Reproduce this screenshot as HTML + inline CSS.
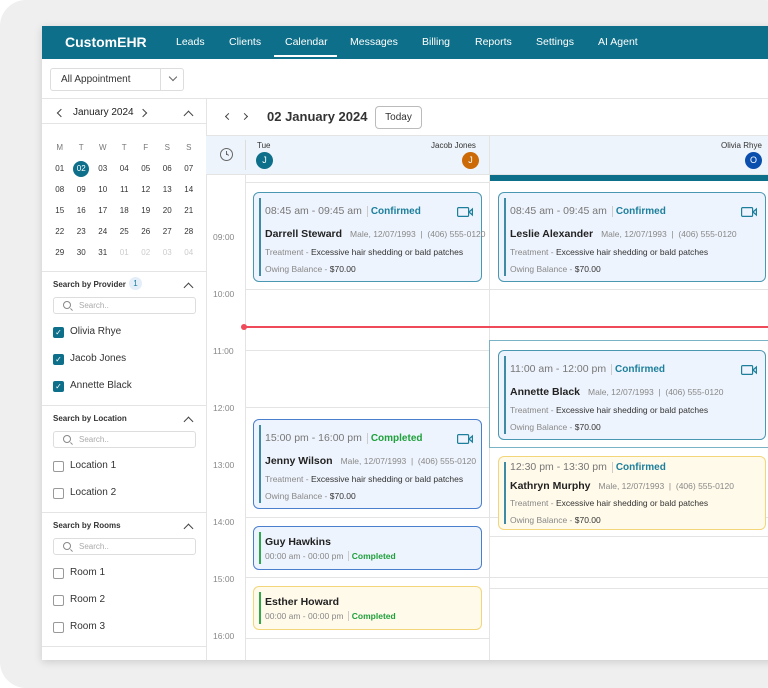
<!DOCTYPE html>
<html><head><meta charset="utf-8"><style>
*{box-sizing:border-box;margin:0;padding:0}
body{width:768px;height:688px;background:#fff;font-family:"Liberation Sans",sans-serif;position:relative;overflow:hidden;color:#222}
.bg{position:absolute;left:0;top:0;width:790px;height:688px;background:#efefef;border-radius:26px}
.app{position:absolute;left:42px;top:26px;width:740px;height:634px;background:#fff;box-shadow:0 2px 8px rgba(0,0,0,.15);overflow:hidden}
.a{position:absolute}
.nav{left:0;top:0;width:740px;height:33px;background:#0d6f89;color:#fff}
.nav span{position:absolute;top:10px;font-size:10.5px}
.cal td{width:21.5px;text-align:center;font-size:8px;height:21px;color:#333}
.cb{position:absolute;width:11px;height:11px;border-radius:2px}
.cb.on{background:#0d6f89;color:#fff;font-size:8px;line-height:11px;text-align:center}
.cb.off{border:1px solid #999;background:#fff}
.lbl{position:absolute;font-size:10px;color:#333}
.sh{position:absolute;font-size:8px;font-weight:bold;color:#333}
.srch{position:absolute;left:11px;width:143px;height:17px;border:1px solid #ddd;border-radius:3px;font-size:8px;color:#aaa;padding:3px 0 0 25px}
.srch i{position:absolute;left:9px;top:3px;width:8px;height:8px;border:1px solid #888;border-radius:50%}
.srch i:after{content:"";position:absolute;left:6px;top:7px;width:3px;height:1px;background:#888;transform:rotate(45deg)}
.chev{position:absolute;width:7px;height:7px;border-left:1.3px solid #444;border-top:1.3px solid #444;transform:rotate(45deg)}
.card{position:absolute;border:1px solid #4a97b2;background:#eef4fd;border-radius:6px}
.card .bar{position:absolute;left:5px;top:5px;bottom:5px;width:2px;background:#3f8aa5}
.card div{position:absolute;left:11px;white-space:nowrap}
.t{font-size:10.5px;color:#777}
.st{font-size:10px;font-weight:bold;color:#1c7f9c;border-left:1px solid #ccc;padding-left:3px;margin-left:2px}
.nm{font-size:10.5px;font-weight:bold;color:#222}
.mt{font-size:8.5px;color:#888;font-weight:normal;margin-left:8px}
.tr{font-size:8.5px;color:#888}
.tr b{font-weight:normal;color:#333}
.vid{position:absolute;top:14px;right:8px;width:16px;height:10px}
.hr{position:absolute;font-size:8.5px;color:#888;left:6px}
.ln{position:absolute;height:1px;background:#e4e4e4}
</style></head><body>
<div class="bg"></div>
<div class="app">
 <div class="a nav">
  <span style="left:23px;top:8px;font-size:14px;font-weight:bold">CustomEHR</span>
  <span style="left:134px">Leads</span><span style="left:187px">Clients</span>
  <span style="left:243px">Calendar</span><div class="a" style="left:232px;top:29px;width:63px;height:2px;background:#fff"></div>
  <span style="left:308px">Messages</span><span style="left:380px">Billing</span><span style="left:433px">Reports</span><span style="left:494px">Settings</span><span style="left:556px">AI Agent</span>
 </div>
 <div class="a" style="left:8px;top:42px;width:134px;height:23px;border:1px solid #ddd;border-radius:3px"></div>
 <div class="a" style="left:19px;top:48px;font-size:10px;color:#333">All Appointment</div>
 <div class="a" style="left:118px;top:43px;width:1px;height:21px;background:#ddd"></div>
 <div class="chev" style="left:128px;top:48px;transform:rotate(225deg);width:6px;height:6px;border-color:#666"></div>
 <div class="ln" style="left:0;top:72px;width:740px"></div>
 <div class="a" style="left:164px;top:72px;width:1px;height:562px;background:#e4e4e4"></div>
 <div class="chev" style="left:16px;top:84px;transform:rotate(-45deg);width:6px;height:6px"></div>
 <div class="a" style="left:31px;top:81px;font-size:10px;color:#222">January 2024</div>
 <div class="chev" style="left:98px;top:84px;transform:rotate(135deg);width:6px;height:6px"></div>
 <div class="chev" style="left:143px;top:86px"></div>
 <div class="ln" style="left:0;top:97px;width:164px"></div>
 <table class="cal a" style="left:7px;top:111px;border-collapse:collapse">
  <tr><td style="color:#777;height:20px">M</td><td style="color:#777">T</td><td style="color:#777">W</td><td style="color:#777">T</td><td style="color:#777">F</td><td style="color:#777">S</td><td style="color:#777">S</td></tr>
  <tr><td>01</td><td><span style="display:inline-block;width:16px;height:16px;line-height:16px;border-radius:50%;background:#0d6f89;color:#fff">02</span></td><td>03</td><td>04</td><td>05</td><td>06</td><td>07</td></tr>
  <tr><td>08</td><td>09</td><td>10</td><td>11</td><td>12</td><td>13</td><td>14</td></tr>
  <tr><td>15</td><td>16</td><td>17</td><td>18</td><td>19</td><td>20</td><td>21</td></tr>
  <tr><td>22</td><td>23</td><td>24</td><td>25</td><td>26</td><td>27</td><td>28</td></tr>
  <tr><td>29</td><td>30</td><td>31</td><td style="color:#ccc">01</td><td style="color:#ccc">02</td><td style="color:#ccc">03</td><td style="color:#ccc">04</td></tr>
 </table>
 <div class="ln" style="left:0;top:245px;width:164px"></div>
 <div class="sh" style="left:11px;top:254px">Search by Provider</div>
 <div class="a" style="left:87px;top:251px;width:13px;height:13px;border-radius:50%;background:#e3eef9;font-size:8px;color:#1c7f9c;text-align:center;line-height:13px">1</div>
 <div class="chev" style="left:143px;top:258px"></div>
 <div class="srch" style="top:271px"><i></i>Search..</div>
 <div class="cb on" style="left:11px;top:301px">✓</div><div class="lbl" style="left:28px;top:300px">Olivia Rhye</div>
 <div class="cb on" style="left:11px;top:328px">✓</div><div class="lbl" style="left:28px;top:327px">Jacob Jones</div>
 <div class="cb on" style="left:11px;top:355px">✓</div><div class="lbl" style="left:28px;top:354px">Annette Black</div>
 <div class="ln" style="left:0;top:379px;width:164px"></div>
 <div class="sh" style="left:11px;top:388px">Search by Location</div>
 <div class="chev" style="left:143px;top:392px"></div>
 <div class="srch" style="top:405px"><i></i>Search..</div>
 <div class="cb off" style="left:11px;top:435px"></div><div class="lbl" style="left:28px;top:434px">Location 1</div>
 <div class="cb off" style="left:11px;top:462px"></div><div class="lbl" style="left:28px;top:461px">Location 2</div>
 <div class="ln" style="left:0;top:486px;width:164px"></div>
 <div class="sh" style="left:11px;top:495px">Search by Rooms</div>
 <div class="chev" style="left:143px;top:499px"></div>
 <div class="srch" style="top:512px"><i></i>Search..</div>
 <div class="cb off" style="left:11px;top:542px"></div><div class="lbl" style="left:28px;top:541px">Room 1</div>
 <div class="cb off" style="left:11px;top:569px"></div><div class="lbl" style="left:28px;top:568px">Room 2</div>
 <div class="cb off" style="left:11px;top:596px"></div><div class="lbl" style="left:28px;top:595px">Room 3</div>
 <div class="ln" style="left:0;top:620px;width:164px"></div>
 <div class="chev" style="left:184px;top:88px;transform:rotate(-45deg);width:5px;height:5px"></div>
 <div class="chev" style="left:200px;top:88px;transform:rotate(135deg);width:5px;height:5px"></div>
 <div class="a" style="left:225px;top:83px;font-size:13px;font-weight:bold;color:#333">02 January 2024</div>
 <div class="a" style="left:333px;top:80px;width:47px;height:23px;border:1px solid #bbb;border-radius:4px;font-size:10px;color:#333;text-align:center;line-height:21px">Today</div>
 <div class="a" style="left:164px;top:109px;width:576px;height:40px;background:#eef4fb;border-top:1px solid #e4e4e4;border-bottom:1px solid #e4e4e4"></div>
 <div class="a" style="left:178px;top:122px;width:13px;height:13px;border:1.3px solid #666;border-radius:50%"></div>
 <div class="a" style="left:184px;top:125px;width:1.3px;height:4px;background:#666"></div>
 <div class="a" style="left:184px;top:128px;width:3px;height:1.3px;background:#666;transform:rotate(40deg)"></div>
 <div class="a" style="left:203px;top:114px;width:1px;height:30px;background:#ddd"></div>
 <div class="a" style="left:215px;top:115px;font-size:8px;color:#333">Tue</div>
 <div class="a" style="left:214px;top:126px;width:17px;height:17px;border-radius:50%;background:#0d6f89;color:#fff;font-size:9px;text-align:center;line-height:17px">J</div>
 <div class="a" style="left:389px;top:115px;font-size:8px;color:#333">Jacob Jones</div>
 <div class="a" style="left:420px;top:126px;width:17px;height:17px;border-radius:50%;background:#cc6a07;color:#fff;font-size:9px;text-align:center;line-height:17px">J</div>
 <div class="a" style="left:447px;top:109px;width:1px;height:525px;background:#e4e4e4"></div>
 <div class="a" style="left:679px;top:115px;font-size:8px;color:#333">Olivia Rhye</div>
 <div class="a" style="left:703px;top:126px;width:17px;height:17px;border-radius:50%;background:#0b4fae;color:#fff;font-size:9px;text-align:center;line-height:17px">O</div>
 <div class="a" style="left:448px;top:149px;width:292px;height:6px;background:#0d6f89"></div>
 <div class="a" style="left:203px;top:149px;width:1px;height:485px;background:#e4e4e4"></div>
 <div class="ln" style="left:203px;top:156px;width:244px"></div>
 <div class="hr" style="left:171px;top:206px">09:00</div>
 <div class="hr" style="left:171px;top:263px">10:00</div>
 <div class="hr" style="left:171px;top:320px">11:00</div>
 <div class="hr" style="left:171px;top:377px">12:00</div>
 <div class="hr" style="left:171px;top:434px">13:00</div>
 <div class="hr" style="left:171px;top:491px">14:00</div>
 <div class="hr" style="left:171px;top:548px">15:00</div>
 <div class="hr" style="left:171px;top:605px">16:00</div>
 <div class="ln" style="left:203px;top:263px;width:537px"></div>
 <div class="ln" style="left:203px;top:324px;width:244px"></div>
 <div class="ln" style="left:203px;top:381px;width:244px"></div>
 <div class="ln" style="left:203px;top:491px;width:537px"></div>
 <div class="ln" style="left:203px;top:551px;width:537px"></div>
 <div class="ln" style="left:203px;top:612px;width:244px"></div>
 <div class="ln" style="left:448px;top:421px;width:292px"></div>
 <div class="ln" style="left:448px;top:510px;width:292px"></div>
 <div class="ln" style="left:448px;top:562px;width:292px"></div>
 <div class="a" style="left:447px;top:314px;width:293px;height:108px;border:1px solid #7bb3c6;border-right:none"></div>
 <div class="a" style="left:203px;top:300px;width:537px;height:1.5px;background:#ee4a5a;z-index:5"></div>
 <div class="a" style="left:199px;top:298px;width:6px;height:6px;border-radius:50%;background:#ee4a5a;z-index:5"></div>
 <div class="card" style="left:211px;top:166px;width:229px;height:90px"><span class="bar"></span>
  <div class="t" style="top:12px">08:45 am - 09:45 am <span class="st">Confirmed</span></div>
  <div class="nm" style="top:35px">Darrell Steward<span class="mt">Male, 12/07/1993 &nbsp;| &nbsp;(406) 555-0120</span></div>
  <div class="tr" style="top:54px">Treatment - <b>Excessive hair shedding or bald patches</b></div>
  <div class="tr" style="top:71px">Owing Balance - <b>$70.00</b></div>
  <svg class="vid" viewBox="0 0 16 10"><rect x=".6" y=".6" width="11" height="8.8" rx="1" fill="none" stroke="#1c7f9c" stroke-width="1.2"/><path d="M12 5l3.4-3v6z" fill="none" stroke="#1c7f9c" stroke-width="1.2"/></svg></div>
 <div class="card" style="left:456px;top:166px;width:268px;height:90px"><span class="bar"></span>
  <div class="t" style="top:12px">08:45 am - 09:45 am <span class="st">Confirmed</span></div>
  <div class="nm" style="top:35px">Leslie Alexander<span class="mt">Male, 12/07/1993 &nbsp;| &nbsp;(406) 555-0120</span></div>
  <div class="tr" style="top:54px">Treatment - <b>Excessive hair shedding or bald patches</b></div>
  <div class="tr" style="top:71px">Owing Balance - <b>$70.00</b></div>
  <svg class="vid" viewBox="0 0 16 10"><rect x=".6" y=".6" width="11" height="8.8" rx="1" fill="none" stroke="#1c7f9c" stroke-width="1.2"/><path d="M12 5l3.4-3v6z" fill="none" stroke="#1c7f9c" stroke-width="1.2"/></svg></div>
 <div class="card" style="left:456px;top:324px;width:268px;height:90px"><span class="bar"></span>
  <div class="t" style="top:12px">11:00 am - 12:00 pm <span class="st">Confirmed</span></div>
  <div class="nm" style="top:35px">Annette Black<span class="mt">Male, 12/07/1993 &nbsp;| &nbsp;(406) 555-0120</span></div>
  <div class="tr" style="top:54px">Treatment - <b>Excessive hair shedding or bald patches</b></div>
  <div class="tr" style="top:71px">Owing Balance - <b>$70.00</b></div>
  <svg class="vid" viewBox="0 0 16 10"><rect x=".6" y=".6" width="11" height="8.8" rx="1" fill="none" stroke="#1c7f9c" stroke-width="1.2"/><path d="M12 5l3.4-3v6z" fill="none" stroke="#1c7f9c" stroke-width="1.2"/></svg></div>
 <div class="card" style="left:456px;top:430px;width:268px;height:74px;background:#fffaea;border-color:#f4d67a"><span class="bar"></span>
  <div class="t" style="top:4px">12:30 pm - 13:30 pm <span class="st">Confirmed</span></div>
  <div class="nm" style="top:23px">Kathryn Murphy<span class="mt">Male, 12/07/1993 &nbsp;| &nbsp;(406) 555-0120</span></div>
  <div class="tr" style="top:41px">Treatment - <b>Excessive hair shedding or bald patches</b></div>
  <div class="tr" style="top:58px">Owing Balance - <b>$70.00</b></div></div>
 <div class="card" style="left:211px;top:393px;width:229px;height:90px;border-color:#4a7fce"><span class="bar"></span>
  <div class="t" style="top:12px">15:00 pm - 16:00 pm <span class="st" style="color:#1ea03b">Completed</span></div>
  <div class="nm" style="top:35px">Jenny Wilson<span class="mt">Male, 12/07/1993 &nbsp;| &nbsp;(406) 555-0120</span></div>
  <div class="tr" style="top:54px">Treatment - <b>Excessive hair shedding or bald patches</b></div>
  <div class="tr" style="top:71px">Owing Balance - <b>$70.00</b></div>
  <svg class="vid" viewBox="0 0 16 10"><rect x=".6" y=".6" width="11" height="8.8" rx="1" fill="none" stroke="#1c7f9c" stroke-width="1.2"/><path d="M12 5l3.4-3v6z" fill="none" stroke="#1c7f9c" stroke-width="1.2"/></svg></div>
 <div class="card" style="left:211px;top:500px;width:229px;height:44px;border-color:#4a7fce"><span class="bar" style="background:#2ea84a"></span>
  <div class="nm" style="top:9px">Guy Hawkins</div>
  <div class="tr" style="top:24px">00:00 am - 00:00 pm <span class="st" style="color:#1ea03b;font-size:8.5px">Completed</span></div></div>
 <div class="card" style="left:211px;top:560px;width:229px;height:44px;background:#fffaea;border-color:#f4d67a"><span class="bar" style="background:#2ea84a"></span>
  <div class="nm" style="top:9px">Esther Howard</div>
  <div class="tr" style="top:24px">00:00 am - 00:00 pm <span class="st" style="color:#1ea03b;font-size:8.5px">Completed</span></div></div>
</div>
</body></html>
